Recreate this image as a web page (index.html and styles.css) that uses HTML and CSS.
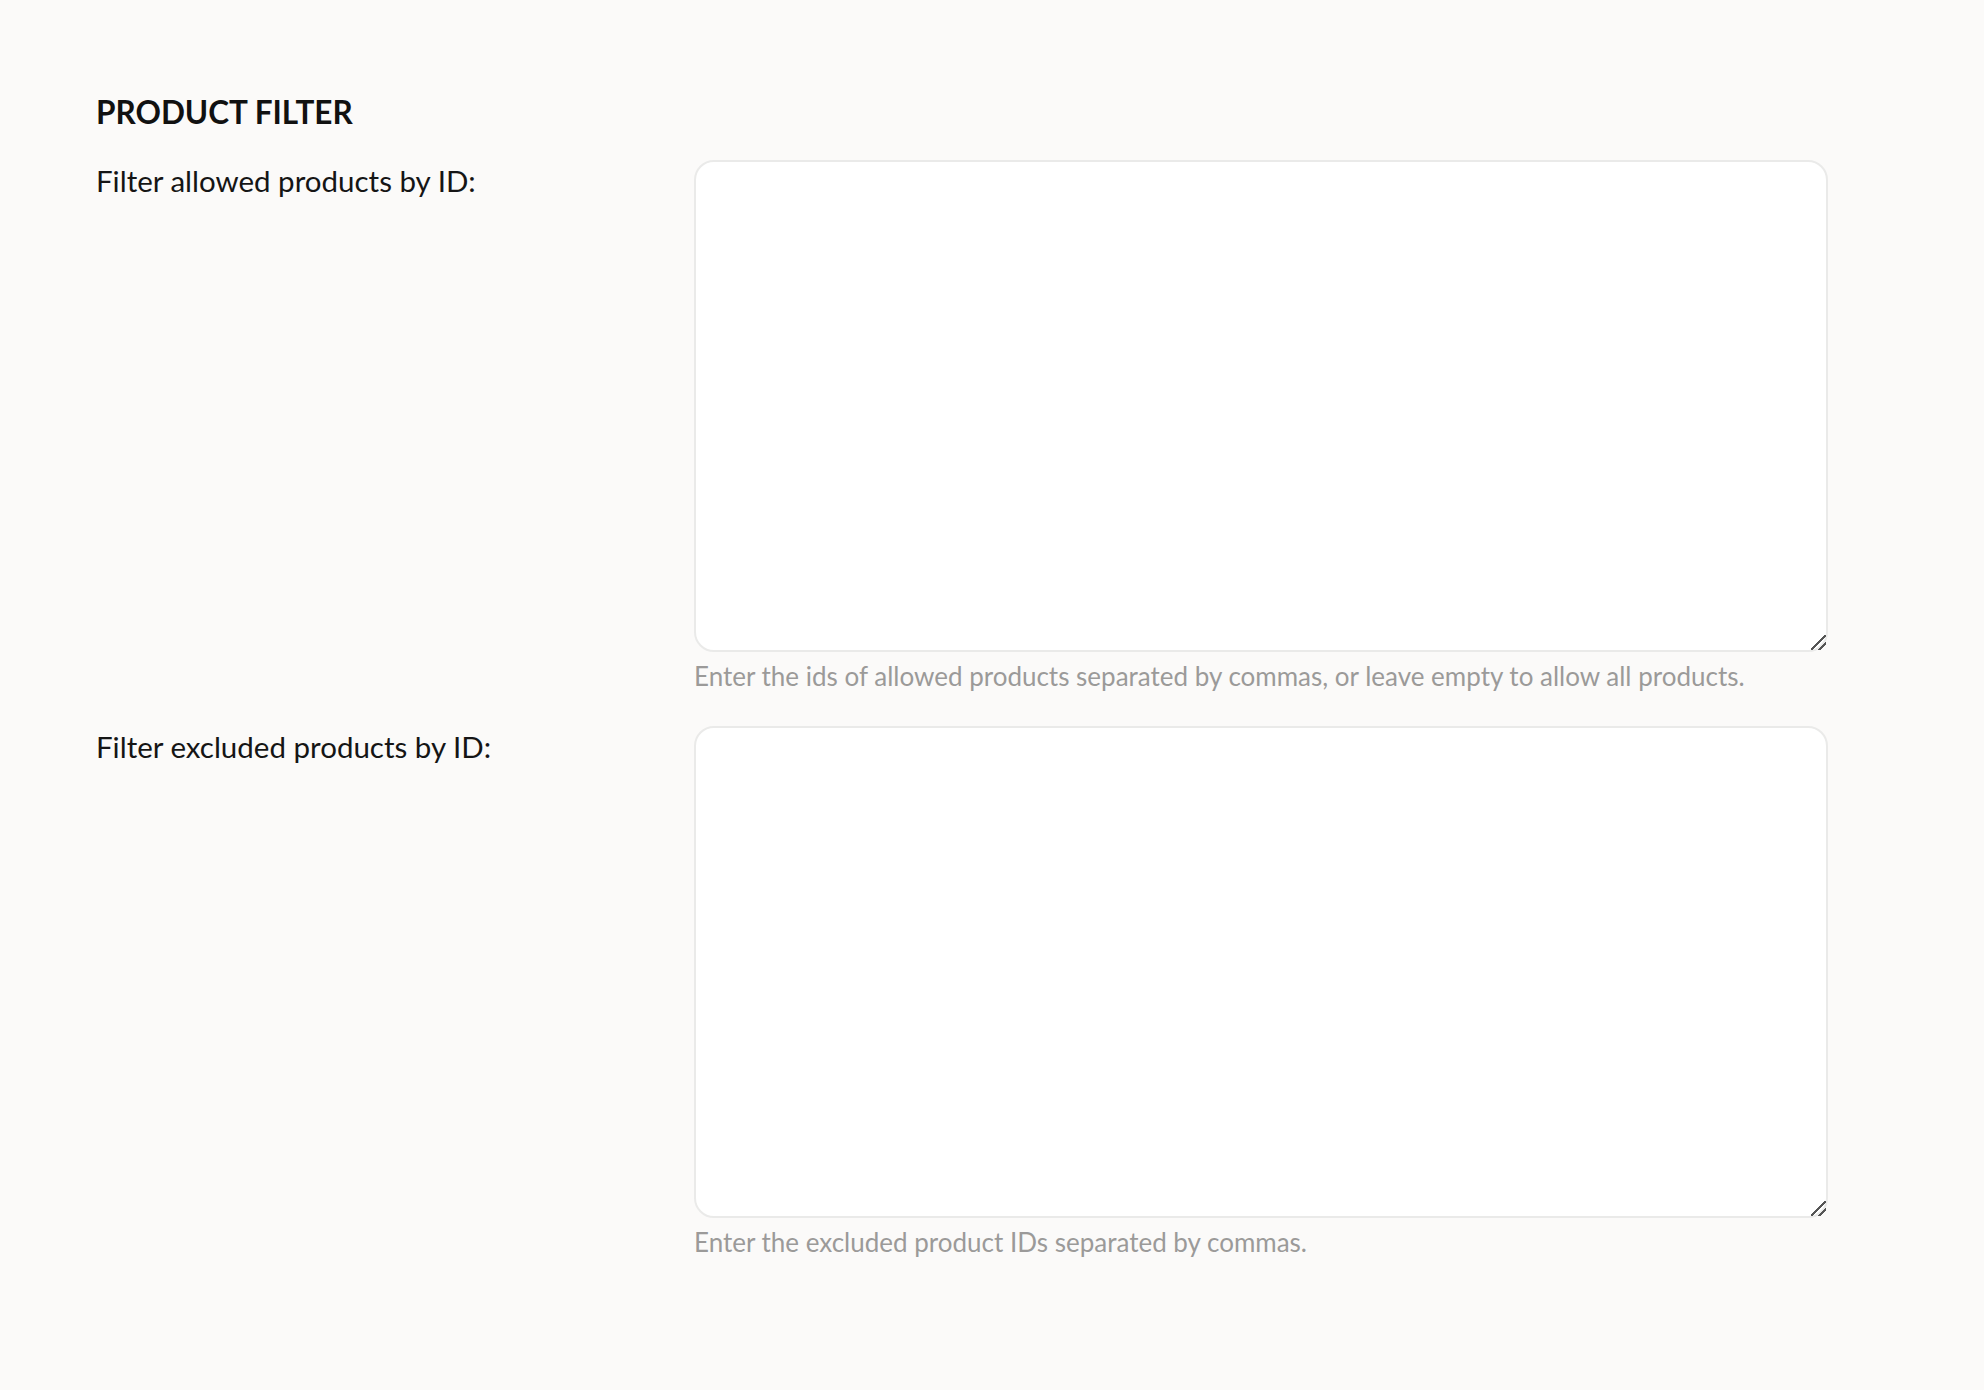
FILE: index.html
```html
<!DOCTYPE html>
<html lang="en">
<head>
<meta charset="utf-8">
<title>Product Filter</title>
<link rel="stylesheet" href="styles.css">
</head>
<body>
<main class="page">
  <section class="settings">
    <h2 class="section-title">PRODUCT FILTER</h2>
    <div class="field-row">
      <label class="field-label" for="allowed">Filter allowed products by ID:</label>
      <div class="field-control">
        <textarea id="allowed" class="field-input"></textarea>
        <p class="field-hint">Enter the ids of allowed products separated by commas, or leave empty to allow all products.</p>
      </div>
    </div>
    <div class="field-row">
      <label class="field-label" for="excluded">Filter excluded products by ID:</label>
      <div class="field-control">
        <textarea id="excluded" class="field-input"></textarea>
        <p class="field-hint">Enter the excluded product IDs separated by commas.</p>
      </div>
    </div>
  </section>
</main>
</body>
</html>
```
FILE: styles.css
```css
html, body {
  margin: 0;
  padding: 0;
}
body {
  background: #fbfaf9;
  font-family: Lato, "Noto Sans", sans-serif;
  color: #151515;
}
.page {
  padding: 92px 156px 80px 96px;
}
.section-title {
  margin: 0 0 28px 0;
  font-size: 31.5px;
  line-height: 40px;
  font-weight: 700;
  color: #111;
}
.field-row {
  display: grid;
  grid-template-columns: 598px 1134px;
  margin-bottom: 33px;
}
.field-label {
  font-size: 29.5px;
  line-height: 36px;
  padding-top: 3px;
  color: #151515;
}
.field-control {
  display: flex;
  flex-direction: column;
}
.field-input {
  box-sizing: border-box;
  width: 1134px;
  height: 492px;
  background: #fff;
  border: 2px solid #eaeae9;
  border-radius: 20px;
  margin: 0;
  padding: 12px 16px;
  font: inherit;
  outline: none;
  resize: vertical;
}
.field-input::-webkit-scrollbar {
  width: 16px;
  height: 16px;
}
.field-input::-webkit-resizer {
  background: linear-gradient(135deg,
    transparent 0%, transparent 45%,
    #555 45%, #555 54%,
    transparent 54%, transparent 72%,
    #555 72%, #555 81%,
    transparent 81%, transparent 100%);
}
.field-hint {
  margin: 7px 0 0 0;
  font-size: 26px;
  line-height: 34px;
  color: #9b9a99;
}
```
